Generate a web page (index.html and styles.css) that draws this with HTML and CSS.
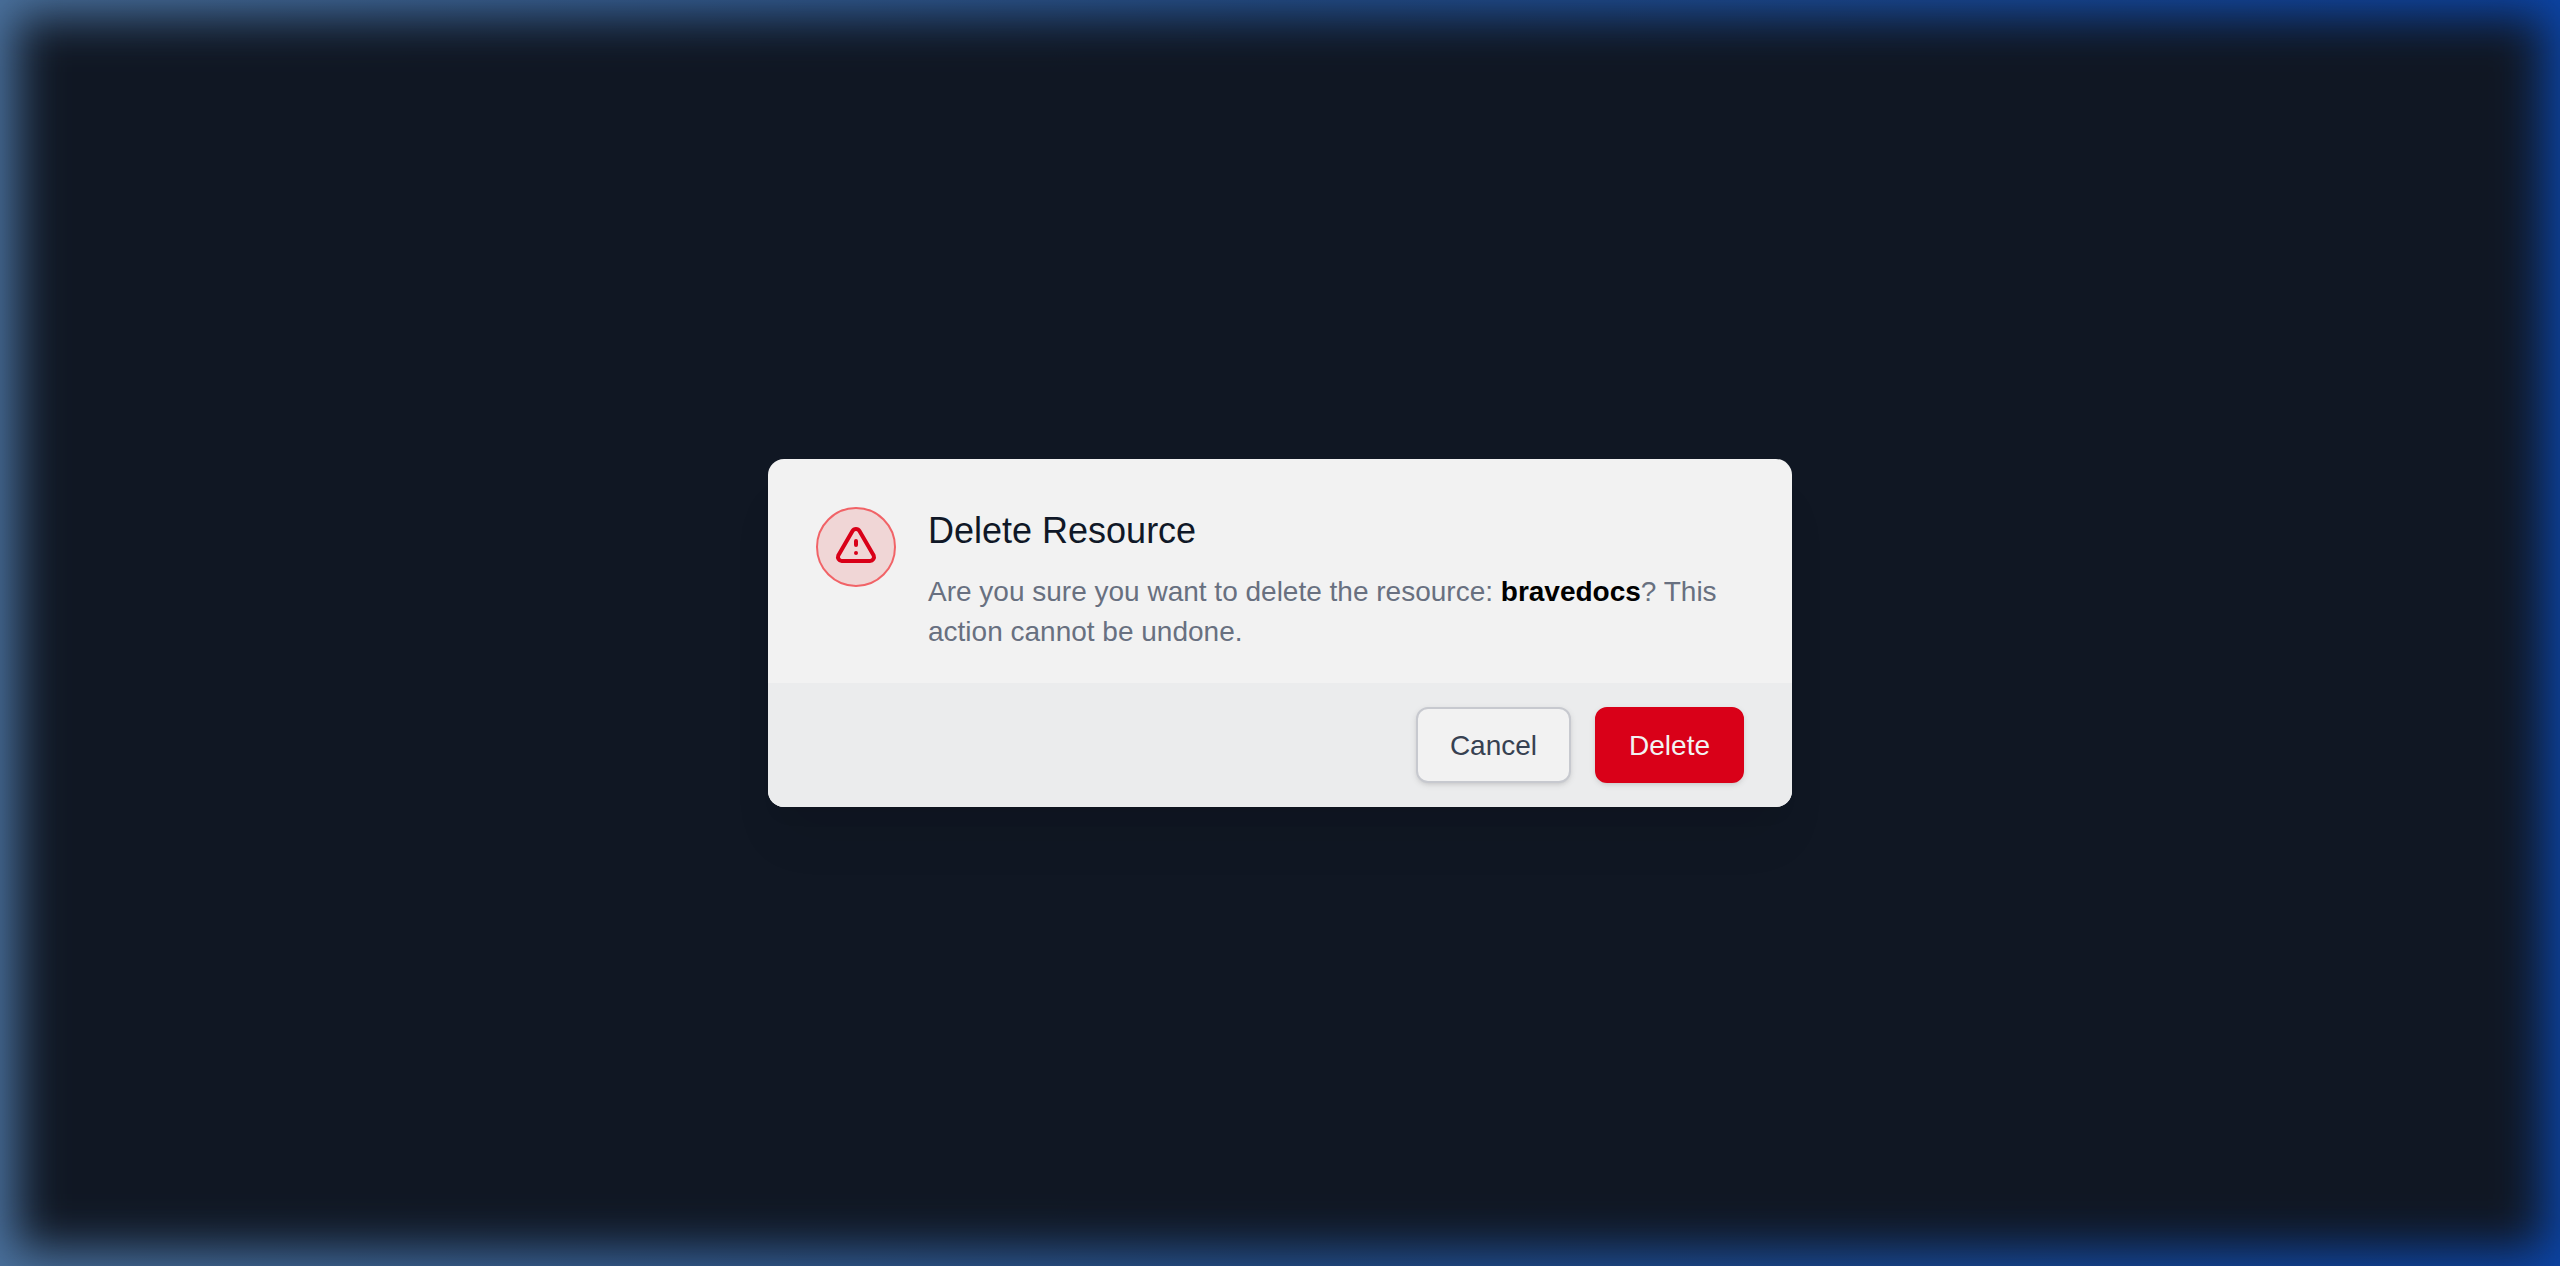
FILE: index.html
```html
<!DOCTYPE html>
<html lang="en">
<head>
    <meta charset="UTF-8">
    <meta name="viewport" content="width=device-width, initial-scale=1.0">
    <title>Delete Resource</title>
    <link rel="stylesheet" href="styles.css">
</head>
<body>
    <div class="backdrop"></div>
    <div class="modal" role="dialog" aria-modal="true" aria-labelledby="modal-title">
        <div class="modal-body">
            <div class="modal-icon">
                <svg viewBox="0 0 24 24" fill="none" stroke="currentColor" stroke-width="2" stroke-linecap="round" stroke-linejoin="round" aria-hidden="true">
                    <path d="M12 9v2m0 4v.01"/>
                    <path d="M5 19h14a2 2 0 0 0 1.84 -2.75l-7.1 -12.25a2 2 0 0 0 -3.5 0l-7.1 12.25a2 2 0 0 0 1.75 2.75"/>
                </svg>
            </div>
            <div class="modal-content">
                <h3 id="modal-title">Delete Resource</h3>
                <p>Are you sure you want to delete the resource: <strong>bravedocs</strong>? This action cannot be undone.</p>
            </div>
        </div>
        <div class="modal-footer">
            <button type="button" class="btn btn-cancel">Cancel</button>
            <button type="button" class="btn btn-delete">Delete</button>
        </div>
    </div>
</body>
</html>
```

FILE: styles.css
```css
* {
    box-sizing: border-box;
}

body {
    font-family: Helvetica, "Liberation Sans", Arial, sans-serif;
    background: linear-gradient(90deg, #4a719d 0%, #24508e 50%, #0c44a5 100%);
    margin: 0;
    min-height: 100vh;
    display: flex;
    align-items: center;
    justify-content: center;
    overflow: hidden;
}

/* dark overlay with soft edges */
.backdrop {
    position: absolute;
    inset: 17px;
    background: #101723;
    filter: blur(23px);
}

.modal {
    position: relative;
    width: 1024px;
    background: #f2f2f2;
    border-radius: 16px;
    overflow: hidden;
    box-shadow: 0 40px 50px -10px rgba(0, 0, 0, 0.07), 0 16px 20px -12px rgba(0, 0, 0, 0.07);
}

.modal-body {
    display: flex;
    gap: 32px;
    padding: 48px 48px 32px;
}

.modal-icon {
    display: flex;
    align-items: center;
    justify-content: center;
    flex-shrink: 0;
    width: 80px;
    height: 80px;
    color: #d90018;
    background: #f0d6d6;
    border: 2px solid #f16367;
    border-radius: 50%;
}

.modal-icon svg {
    width: 48px;
    height: 48px;
}

.modal-content h3 {
    margin: 0 0 17px;
    font-size: 36px;
    line-height: 48px;
    font-weight: 400;
    color: #101827;
}

.modal-content p {
    margin: 0 0 -1px;
    font-size: 28px;
    line-height: 40px;
    color: #687080;
}

.modal-content strong {
    color: #000;
}

.modal-footer {
    display: flex;
    justify-content: flex-end;
    gap: 24px;
    padding: 24px 48px;
    background: #ebeced;
}

.btn {
    font-family: inherit;
    font-size: 28px;
    line-height: 40px;
    padding: 17px 32px 15px;
    border: 2px solid transparent;
    border-radius: 12px;
    box-shadow: 0 2px 6px rgba(0, 0, 0, 0.1), 0 2px 4px -2px rgba(0, 0, 0, 0.1);
    cursor: pointer;
}

.btn-cancel {
    color: #374151;
    background: #f2f2f2;
    border-color: #c7c9cf;
}

.btn-delete {
    color: #f2f2f2;
    background: #d90018;
    border-color: #d90018;
}
```
